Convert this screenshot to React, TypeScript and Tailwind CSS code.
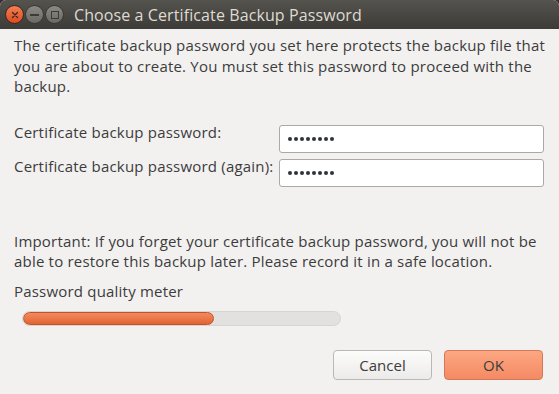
const Dots = () => (
  <div className="flex gap-[2px]">
    {Array.from({ length: 8 }).map((_, i) => (
      <div key={i} className="w-[4px] h-[4px] rounded-full bg-[#2f3437]" />
    ))}
  </div>
)

export default function App() {
  return (
    <div className="w-[559px] h-[394px] bg-[#3b2a33] overflow-hidden" style={{ fontFamily: '"Open Sans", "DejaVu Sans", sans-serif' }}>
      <div className="h-full rounded-t-[6px] overflow-hidden flex flex-col bg-[#f2f1f0]">
        {/* title bar */}
        <div className="h-[29px] shrink-0 bg-gradient-to-b from-[#55534e] to-[#3c3b37] flex items-center pl-[5px]">
          <div className="flex items-center gap-[1px]">
            <div className="w-[19px] h-[19px] rounded-full bg-gradient-to-b from-[#f37d52] to-[#df4a1c] border border-[#3a2a22] flex items-center justify-center">
              <svg width="8" height="8" viewBox="0 0 8 8"><path d="M1.5 1.5 L6.5 6.5 M6.5 1.5 L1.5 6.5" stroke="#3c2a22" strokeWidth="1.4" strokeLinecap="round" /></svg>
            </div>
            <div className="w-[19px] h-[19px] rounded-full bg-gradient-to-b from-[#8d8a84] to-[#6b6964] border border-[#3a3935] flex items-center justify-center">
              <div className="w-[9px] h-[2px] bg-[#3c3b37]" />
            </div>
            <div className="w-[19px] h-[19px] rounded-full bg-gradient-to-b from-[#8d8a84] to-[#6b6964] border border-[#3a3935] flex items-center justify-center">
              <div className="w-[8px] h-[8px] border-[1.5px] border-[#3c3b37]" />
            </div>
          </div>
          <div className="ml-[10px] text-[16px] text-[#dfdbd2] tracking-[0.1px]">Choose a Certificate Backup Password</div>
        </div>

        {/* body */}
        <div className="flex-1 flex flex-col px-[14px] text-[#3c3c3c] text-[15px] tracking-[0.2px] leading-[20.5px]">
          <p className="mt-[6px] -mr-[10px]">
            The certificate backup password you set here protects the backup file that you are about to create. You must set this password to proceed with the backup.
          </p>

          <div className="mt-[28px] flex flex-col gap-[6px]">
            <div className="flex items-start justify-between">
              <span className="-mt-[3px]">Certificate backup password:</span>
              <div className="w-[265px] h-[28px] mr-[1px] bg-white border border-[#aaa9a5] rounded-[3px] flex items-center px-[8px]">
                <Dots />
              </div>
            </div>
            <div className="flex items-start justify-between">
              <span className="-mt-[3px]">Certificate backup password (again):</span>
              <div className="w-[265px] h-[28px] mr-[1px] bg-white border border-[#aaa9a5] rounded-[3px] flex items-center px-[8px]">
                <Dots />
              </div>
            </div>
          </div>

          <p className="mt-[44px]">
            Important: If you forget your certificate backup password, you will not be able to restore this backup later. Please record it in a safe location.
          </p>

          <div className="mt-[9px]">Password quality meter</div>

          <div className="mt-[10px] ml-[8px] w-[319px] h-[15px] rounded-full bg-[#e2e1df] border border-[#d6d5d2] overflow-hidden">
            <div className="w-[191px] h-full rounded-full bg-gradient-to-b from-[#f28a5e] to-[#e26433] border border-[#c6512a]" />
          </div>

          <div className="mt-[24px] flex justify-end gap-[12px] pr-[2px] tracking-normal">
            <button className="w-[99px] h-[30px] rounded-[4px] border border-[#b9b8b4] bg-gradient-to-b from-[#fcfcfb] to-[#ecebe9] text-[#3c3c3c] text-[15px]">Cancel</button>
            <button className="w-[99px] h-[30px] rounded-[4px] border border-[#d5775a] bg-gradient-to-b from-[#fca783] to-[#f48a63] text-[#3c3c3c] text-[15px]">OK</button>
          </div>
        </div>
      </div>
    </div>
  )
}
